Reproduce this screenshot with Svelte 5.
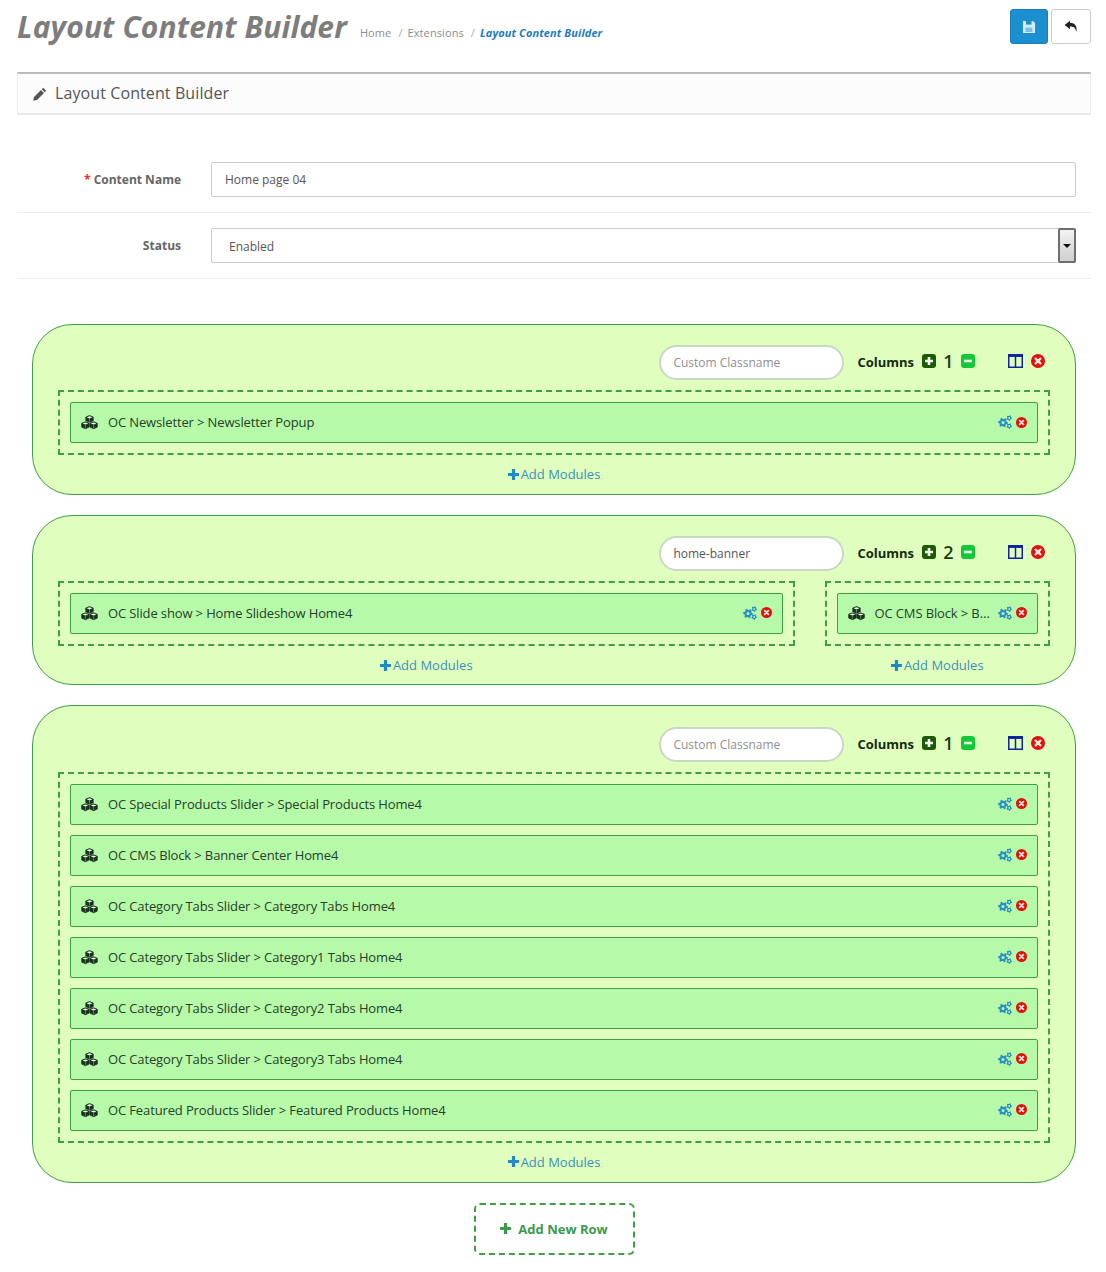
<script>
  const rows = [
    {
      classname: '',
      count: 1,
      columns: [
        { width: 100, modules: ['OC Newsletter > Newsletter Popup'] }
      ]
    },
    {
      classname: 'home-banner',
      count: 2,
      columns: [
        { width: 75, modules: ['OC Slide show > Home Slideshow Home4'] },
        { width: 25, modules: ['OC CMS Block > Banner Top Home4'] }
      ]
    },
    {
      classname: '',
      count: 1,
      columns: [
        {
          width: 100,
          modules: [
            'OC Special Products Slider > Special Products Home4',
            'OC CMS Block > Banner Center Home4',
            'OC Category Tabs Slider > Category Tabs Home4',
            'OC Category Tabs Slider > Category1 Tabs Home4',
            'OC Category Tabs Slider > Category2 Tabs Home4',
            'OC Category Tabs Slider > Category3 Tabs Home4',
            'OC Featured Products Slider > Featured Products Home4'
          ]
        }
      ]
    }
  ];

  // small gear outline, centre (cx, cy), used for the module settings icon
  function gear(cx, cy, r, teeth) {
    const pts = [];
    const n = teeth * 2;
    for (let i = 0; i < n * 2; i++) {
      const a = (i / (n * 2)) * Math.PI * 2;
      const on = Math.floor(i / 2) % 2 === 0;
      const rad = on ? r : r * 0.72;
      pts.push((cx + Math.cos(a) * rad).toFixed(2) + ',' + (cy + Math.sin(a) * rad).toFixed(2));
    }
    return pts.join(' ');
  }
</script>

{#snippet timesCircle(size)}
  <svg class="ico" width={size} height={size} viewBox="0 0 14 14">
    <circle cx="7" cy="7" r="7" fill="#e20f0f" />
    <path d="M4.6 4.6l4.8 4.8M9.4 4.6l-4.8 4.8" stroke="#f6e9e0" stroke-width="2.3" stroke-linecap="round" />
  </svg>
{/snippet}

{#snippet cubes()}
  <svg class="ico" width="17" height="15" viewBox="0 0 17 15">
    <g fill="#1a3320" stroke="#10261a" stroke-width="0.7" stroke-linejoin="round">
      <path d="M8.5 0.6l3.7 1.4v3.7L8.5 7.2 4.8 5.7V2z" />
      <path d="M4.4 6.8l3.7 1.4v3.9l-3.7 1.6-3.7-1.6V8.2z" />
      <path d="M12.6 6.8l3.7 1.4v3.9l-3.7 1.6-3.7-1.6V8.2z" />
    </g>
    <path d="M5.6 2.2l2.9-1 2.9 1-2.9 1.2zM1.5 8.4l2.9-1 2.9 1-2.9 1.2zM9.7 8.4l2.9-1 2.9 1-2.9 1.2z" fill="#eef9e2" />
    <path d="M4.4 9.8v3.4M12.6 9.8v3.4M8.5 3.6v3" stroke="#8fbf84" stroke-width="0.6" />
  </svg>
{/snippet}

{#snippet cogs()}
  <svg class="ico" width="14" height="14" viewBox="0 0 14 14">
    <g fill="#2a8fc4">
      <polygon points={gear(5, 7.5, 5, 6)} />
      <polygon points={gear(11.2, 3, 2.8, 5)} />
      <polygon points={gear(11.2, 11, 2.8, 5)} />
    </g>
    <circle cx="5" cy="7.5" r="1.5" fill="#b6f9a8" />
    <circle cx="11.2" cy="3" r="0.9" fill="#b6f9a8" />
    <circle cx="11.2" cy="11" r="0.9" fill="#b6f9a8" />
  </svg>
{/snippet}

{#snippet plus(color)}
  <svg class="ico" width="11" height="11" viewBox="0 0 11 11">
    <path d="M5.5 0.5v10M0.5 5.5h10" stroke={color} stroke-width="3.2" stroke-linecap="round" />
  </svg>
{/snippet}

<div class="page">
  <header class="top">
    <h1>Layout Content Builder</h1>
    <nav class="crumbs">
      <span>Home</span>
      <i>/</i>
      <span>Extensions</span>
      <i>/</i>
      <b>Layout Content Builder</b>
    </nav>
    <div class="actions">
      <button class="btn save" aria-label="Save">
        <svg width="14" height="14" viewBox="0 0 14 14">
          <path d="M1 1h10l2 2v10H1z" fill="#d6eefa" />
          <rect x="4" y="1" width="5.5" height="3.6" fill="#1b8fd0" />
          <rect x="3.5" y="7.5" width="7" height="4.5" fill="#7cc0e8" />
        </svg>
      </button>
      <button class="btn back" aria-label="Back">
        <svg width="14" height="13" viewBox="0 0 14 13">
          <path d="M6 0.8L0.6 5 6 9.2V6.5c3.2 0 5.2 0.6 6.3 5.2 1-5-0.8-9-6.3-9z" fill="#222" />
        </svg>
      </button>
    </div>
  </header>

  <div class="panel-head">
    <svg width="14" height="14" viewBox="0 0 14 14">
      <path d="M10.2 0.8l3 3-1.4 1.4-3-3zM8 3l3 3-7 7-3.8 0.8L1 10z" fill="#555" />
    </svg>
    <h2>Layout Content Builder</h2>
  </div>

  <form class="fields" onsubmit={(e) => e.preventDefault()}>
    <div class="field">
      <label for="content-name"><em>*</em> Content Name</label>
      <input id="content-name" type="text" value="Home page 04" />
    </div>
    <div class="field">
      <label for="status">Status</label>
      <div class="select-wrap">
        <select id="status">
          <option>Enabled</option>
          <option>Disabled</option>
        </select>
        <span class="arrow"></span>
      </div>
    </div>
  </form>

  <section class="builder">
    {#each rows as row}
      <div class="row">
        <div class="row-tools">
          <input class="classname" type="text" placeholder="Custom Classname" value={row.classname} />
          <div class="col-ctrl">
            <span class="col-label">Columns</span>
            <svg class="ico" width="14" height="14" viewBox="0 0 14 14">
              <rect width="14" height="14" rx="3" fill="#1b5a08" />
              <path d="M7 3v8M3 7h8" stroke="#f3fbe8" stroke-width="2.6" />
            </svg>
            <span class="col-count">{row.count}</span>
            <svg class="ico" width="14" height="14" viewBox="0 0 14 14">
              <rect width="14" height="14" rx="3" fill="#12c83a" />
              <path d="M3 7h8" stroke="#e9fbe0" stroke-width="2.6" />
            </svg>
            <svg class="ico layout" width="15" height="14" viewBox="0 0 15 14">
              <rect x="0.75" y="0.75" width="13.5" height="12.5" fill="none" stroke="#12249c" stroke-width="1.5" />
              <rect x="0.75" y="0.75" width="13.5" height="2.2" fill="#12249c" />
              <path d="M7.5 1v12" stroke="#12249c" stroke-width="1.5" />
            </svg>
            {@render timesCircle(14)}
          </div>
        </div>

        <div class="cols">
          {#each row.columns as col}
            <div class="col" style="width: {col.width}%">
              <div class="dropzone">
                {#each col.modules as mod}
                  <div class="module">
                    {@render cubes()}
                    <span class="mod-name">{mod}</span>
                    <span class="mod-tools">
                      {@render cogs()}
                      {@render timesCircle(11)}
                    </span>
                  </div>
                {/each}
              </div>
              <a class="add-mod" href="#add">
                {@render plus('#1f8ac4')}
                Add Modules
              </a>
            </div>
          {/each}
        </div>
      </div>
    {/each}
  </section>

  <div class="add-row-wrap">
    <button class="add-row">
      {@render plus('#3c9a4c')}
      Add New Row
    </button>
  </div>
</div>

<style>
  :global(body) {
    background: #fff;
    font-family: "Open Sans", "Noto Sans", sans-serif;
    font-size: 13px;
    color: #333;
  }
  .page {
    padding: 0 15px 17px 17px;
  }
  .ico {
    display: block;
    flex: none;
  }

  .top {
    display: flex;
    align-items: flex-start;
    height: 72px;
  }
  h1 {
    margin: 7px 0 0;
    font-size: 30px;
    line-height: 40px;
    font-weight: 700;
    font-style: italic;
    letter-spacing: 0.1px;
    color: #7d7d7d;
  }
  .crumbs {
    display: flex;
    gap: 5px;
    margin: 25px 0 0 13px;
    font-size: 11px;
    line-height: 16px;
    letter-spacing: 0.1px;
    color: #8d8d8d;
  }
  .crumbs i {
    font-style: normal;
    color: #aaa;
    margin-left: 2px;
  }
  .crumbs b {
    font-style: italic;
    color: #1f7cb8;
  }
  .actions {
    display: flex;
    gap: 3px;
    margin: 9px 0 0 auto;
  }
  .btn {
    display: flex;
    align-items: center;
    justify-content: center;
    height: 35px;
    padding: 0;
    border-radius: 3px;
  }
  .save {
    width: 38px;
    background: #1b8fd0;
    border: 1px solid #187fb8;
  }
  .back {
    width: 40px;
    background: #fff;
    border: 1px solid #ccc;
  }

  .panel-head {
    display: flex;
    align-items: center;
    gap: 8px;
    height: 39px;
    padding: 0 15px;
    background: #fcfcfc;
    border: 1px solid #eee;
    border-top: 2px solid #bbb;
    border-bottom: 2px solid #e8e8e8;
    box-sizing: content-box;
  }
  h2 {
    margin: -2px 0 0;
    font-size: 16px;
    font-weight: 400;
    letter-spacing: 0.1px;
    color: #555;
  }

  .fields {
    margin-top: 32px;
  }
  .field {
    display: flex;
    align-items: center;
    padding: 15px 15px 15px 0;
    border-bottom: 1px solid #eee;
  }
  label {
    width: 164px;
    margin-right: 30px;
    text-align: right;
    font-size: 12px;
    font-weight: 700;
    color: #666;
  }
  label em {
    font-style: normal;
    color: #e03030;
  }
  .field input,
  .select-wrap {
    flex: 1;
  }
  .field input,
  select {
    display: block;
    box-sizing: border-box;
    width: 100%;
    height: 35px;
    padding: 0 13px;
    background: #fff;
    border: 1px solid #ccc;
    border-radius: 2px;
    font: 12px "Open Sans", sans-serif;
    color: #555;
  }
  select {
    appearance: none;
    padding: 2px 0 0 17px;
  }
  .select-wrap {
    position: relative;
  }
  .arrow {
    position: absolute;
    top: 0;
    right: 0;
    box-sizing: border-box;
    width: 18px;
    height: 35px;
    background: linear-gradient(#f2f2f2, #cfcfcf);
    border: 2px solid #6e6e6e;
    border-radius: 2px;
  }
  .arrow::after {
    content: "";
    position: absolute;
    left: 3px;
    top: 14px;
    border: 4px solid transparent;
    border-top: 4px solid #111;
  }

  .builder {
    margin: 44.9px 15px 0;
  }
  .row {
    margin-bottom: 20px;
    padding: 20.3px 25px 0;
    background: #e0ffbe;
    border: 1px solid #3f9e46;
    border-radius: 40px;
  }
  .row:last-child {
    padding-bottom: 1px;
  }
  .row-tools {
    display: flex;
    align-items: center;
    justify-content: flex-end;
    height: 35px;
    margin-bottom: 10px;
    padding-right: 5px;
  }
  .col-ctrl {
    display: flex;
    align-items: center;
    margin-bottom: 3px;
  }
  .classname {
    box-sizing: border-box;
    width: 185px;
    height: 35px;
    padding: 0 12px;
    background: #fff;
    border: 2px solid #c9d8c4;
    border-radius: 18px;
    font: 12px "Open Sans", sans-serif;
    color: #555;
  }
  .classname::placeholder {
    color: #8f8f8f;
  }
  .col-label {
    margin: 2px 8px 0 13px;
    font-size: 13px;
    font-weight: 700;
    color: #152a10;
  }
  .col-count {
    width: 25px;
    text-align: center;
    font-size: 18px;
    font-weight: 600;
    line-height: 20px;
    color: #233a1c;
  }
  .layout {
    margin: 0 8px 0 33px;
  }

  .cols {
    display: flex;
    margin: 0 -15px;
  }
  .col {
    box-sizing: border-box;
    min-width: 0;
    padding: 0 15px;
  }
  .dropzone {
    display: flex;
    flex-direction: column;
    gap: 10px;
    padding: 10px;
    border: 2px dashed #3f9e46;
  }
  .module {
    display: flex;
    align-items: center;
    box-sizing: border-box;
    height: 41px;
    padding: 0 10px;
    background: #b6f9a8;
    border: 1px solid #3f9e46;
    border-radius: 2px;
  }
  .mod-name {
    flex: 1;
    min-width: 0;
    margin: -1px 0 0 10px;
    overflow: hidden;
    white-space: nowrap;
    text-overflow: ellipsis;
    font-size: 13px;
    letter-spacing: -0.13px;
    color: #26402a;
  }
  .mod-tools {
    display: flex;
    align-items: center;
    gap: 4px;
    margin: -1px 0 0 7px;
  }
  .add-mod {
    display: flex;
    align-items: center;
    justify-content: center;
    gap: 2px;
    height: 38.4px;
    font-size: 13px;
    color: #3d8fb8;
    text-decoration: none;
  }

  .add-row-wrap {
    display: flex;
    justify-content: center;
  }
  .add-row {
    display: flex;
    align-items: center;
    justify-content: center;
    gap: 7px;
    width: 161px;
    height: 52px;
    background: #fff;
    border: 2px dashed #3f9e46;
    border-radius: 6px;
    font: 700 13px "Open Sans", sans-serif;
    color: #3c9a4c;
  }
</style>
